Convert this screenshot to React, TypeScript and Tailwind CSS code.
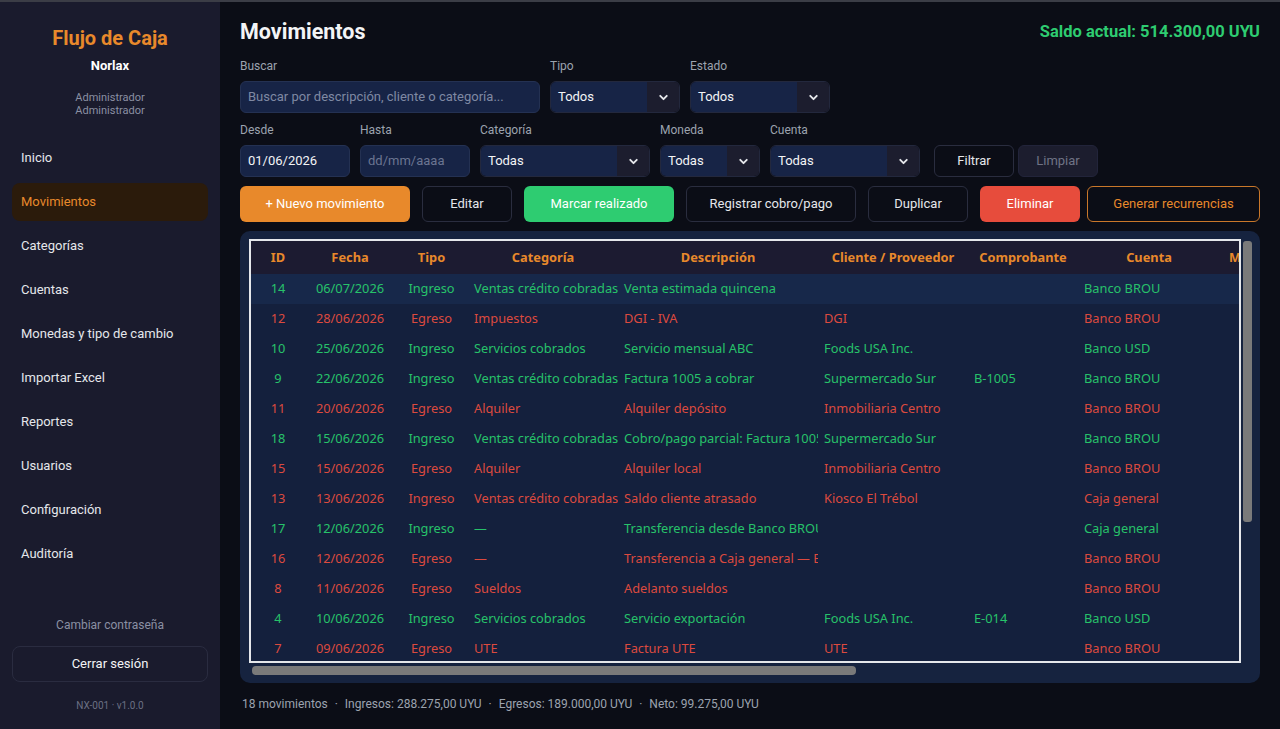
import { ChevronDown } from "lucide-react";

const nav = [
  "Inicio",
  "Movimientos",
  "Categorías",
  "Cuentas",
  "Monedas y tipo de cambio",
  "Importar Excel",
  "Reportes",
  "Usuarios",
  "Configuración",
  "Auditoría",
];

type Row = {
  id: number;
  fecha: string;
  tipo: string;
  cat: string;
  desc: string;
  cli: string;
  comp: string;
  cuenta: string;
  ok: boolean;
};

const rows: Row[] = [
  { id: 14, fecha: "06/07/2026", tipo: "Ingreso", cat: "Ventas crédito cobradas", desc: "Venta estimada quincena", cli: "", comp: "", cuenta: "Banco BROU", ok: true },
  { id: 12, fecha: "28/06/2026", tipo: "Egreso", cat: "Impuestos", desc: "DGI - IVA", cli: "DGI", comp: "", cuenta: "Banco BROU", ok: false },
  { id: 10, fecha: "25/06/2026", tipo: "Ingreso", cat: "Servicios cobrados", desc: "Servicio mensual ABC", cli: "Foods USA Inc.", comp: "", cuenta: "Banco USD", ok: true },
  { id: 9, fecha: "22/06/2026", tipo: "Ingreso", cat: "Ventas crédito cobradas", desc: "Factura 1005 a cobrar", cli: "Supermercado Sur", comp: "B-1005", cuenta: "Banco BROU", ok: true },
  { id: 11, fecha: "20/06/2026", tipo: "Egreso", cat: "Alquiler", desc: "Alquiler depósito", cli: "Inmobiliaria Centro", comp: "", cuenta: "Banco BROU", ok: false },
  { id: 18, fecha: "15/06/2026", tipo: "Ingreso", cat: "Ventas crédito cobradas", desc: "Cobro/pago parcial: Factura 1005 a cobrar", cli: "Supermercado Sur", comp: "", cuenta: "Banco BROU", ok: true },
  { id: 15, fecha: "15/06/2026", tipo: "Egreso", cat: "Alquiler", desc: "Alquiler local", cli: "Inmobiliaria Centro", comp: "", cuenta: "Banco BROU", ok: false },
  { id: 13, fecha: "13/06/2026", tipo: "Ingreso", cat: "Ventas crédito cobradas", desc: "Saldo cliente atrasado", cli: "Kiosco El Trébol", comp: "", cuenta: "Caja general", ok: false },
  { id: 17, fecha: "12/06/2026", tipo: "Ingreso", cat: "—", desc: "Transferencia desde Banco BROU", cli: "", comp: "", cuenta: "Caja general", ok: true },
  { id: 16, fecha: "12/06/2026", tipo: "Egreso", cat: "—", desc: "Transferencia a Caja general — Banco BROU", cli: "", comp: "", cuenta: "Banco BROU", ok: false },
  { id: 8, fecha: "11/06/2026", tipo: "Egreso", cat: "Sueldos", desc: "Adelanto sueldos", cli: "", comp: "", cuenta: "Banco BROU", ok: false },
  { id: 4, fecha: "10/06/2026", tipo: "Ingreso", cat: "Servicios cobrados", desc: "Servicio exportación", cli: "Foods USA Inc.", comp: "E-014", cuenta: "Banco USD", ok: true },
  { id: 7, fecha: "09/06/2026", tipo: "Egreso", cat: "UTE", desc: "Factura UTE", cli: "UTE", comp: "", cuenta: "Banco BROU", ok: false },
];

function Label({ children }: { children: string }) {
  return <p className="mb-[7px] h-4 text-[12px] leading-4 text-[#9ca3af]">{children}</p>;
}

function Select({ value, w }: { value: string; w: string }) {
  return (
    <div className={`flex h-8 overflow-hidden rounded-md border border-[#23283d] ${w}`}>
      <div className="flex flex-1 items-center bg-[#172446] px-[7px] text-[13px] text-[#f3f4f6]">{value}</div>
      <div className="flex w-[32px] items-center justify-center bg-[#1c1d2e]">
        <ChevronDown size={13} strokeWidth={3.5} className="text-[#e5e7eb]" />
      </div>
    </div>
  );
}

export default function App() {
  const cell = "overflow-hidden whitespace-nowrap pl-[6px] pr-0";
  const center = "overflow-hidden whitespace-nowrap px-[3px] text-center";
  return (
    <div className="flex h-[729px] w-[1280px] overflow-hidden border-t-2 border-[#3b3d46] bg-[#0b0d16] font-['Roboto',sans-serif]">
      {/* Sidebar */}
      <aside className="flex w-[220px] shrink-0 flex-col bg-[#1a1b2d] px-3">
        <h1 className="mt-[22px] text-center text-[20px] font-bold leading-7 text-[#e8892b]">Flujo de Caja</h1>
        <p className="mt-[6px] text-center text-[13px] font-bold leading-4 text-white">Norlax</p>
        <div className="mt-[17px] text-center text-[11px] leading-[13px] text-[#8b90a3]">
          <p>Administrador</p>
          <p>Administrador</p>
        </div>
        <nav className="mt-[22px] flex flex-col gap-[6px]">
          {nav.map((n) => (
            <div
              key={n}
              className={`flex h-[38px] items-center rounded-lg px-[9px] text-[13px] ${
                n === "Movimientos" ? "bg-[#2b1b0b] text-[#e8892b]" : "text-[#e5e7eb]"
              }`}
            >
              {n}
            </div>
          ))}
        </nav>
        <div className="mt-auto pb-[17px]">
          <p className="text-center text-[12px] leading-4 text-[#8b90a3]">Cambiar contraseña</p>
          <div className="mt-[13px] flex h-9 items-center justify-center rounded-lg border border-[#2a2c40] text-[13px] text-[#f3f4f6]">
            Cerrar sesión
          </div>
          <p className="mt-[18px] text-center text-[10px] leading-3 text-[#6b7083]">NX-001 · v1.0.0</p>
        </div>
      </aside>

      {/* Main */}
      <main className="flex min-w-0 flex-1 flex-col px-5">
        <div className="mt-[16px] flex items-center justify-between">
          <h2 className="text-[21.5px] font-bold leading-7 text-[#f3f4f6]">Movimientos</h2>
          <p className="text-[16.5px] font-bold text-[#2ecc71]">Saldo actual: 514.300,00 UYU</p>
        </div>

        {/* Filters row 1 */}
        <div className="mt-[12px] flex gap-[10px]">
          <div>
            <Label>Buscar</Label>
            <div className="flex h-8 w-[300px] items-center rounded-md border border-[#243152] bg-[#172446] px-[7px] text-[13px] text-[#7f89a3]">
              Buscar por descripción, cliente o categoría...
            </div>
          </div>
          <div>
            <Label>Tipo</Label>
            <Select value="Todos" w="w-[130px]" />
          </div>
          <div>
            <Label>Estado</Label>
            <Select value="Todos" w="w-[140px]" />
          </div>
        </div>

        {/* Filters row 2 */}
        <div className="mt-[9px] flex items-end gap-[10px]">
          <div>
            <Label>Desde</Label>
            <div className="flex h-8 w-[110px] items-center rounded-md border border-[#243152] bg-[#172446] px-[7px] text-[13px] text-[#f3f4f6]">
              01/06/2026
            </div>
          </div>
          <div>
            <Label>Hasta</Label>
            <div className="flex h-8 w-[110px] items-center rounded-md border border-[#243152] bg-[#172446] px-[7px] text-[13px] text-[#6b7591]">
              dd/mm/aaaa
            </div>
          </div>
          <div>
            <Label>Categoría</Label>
            <Select value="Todas" w="w-[170px]" />
          </div>
          <div>
            <Label>Moneda</Label>
            <Select value="Todas" w="w-[100px]" />
          </div>
          <div>
            <Label>Cuenta</Label>
            <Select value="Todas" w="w-[150px]" />
          </div>
          <div className="ml-[4px] flex gap-1">
            <div className="flex h-8 w-[80px] items-center justify-center rounded-md border border-[#2a2d3f] bg-[#0b0d16] text-[13px] text-[#e5e7eb]">
              Filtrar
            </div>
            <div className="flex h-8 w-[80px] items-center justify-center rounded-md border border-[#22243a] bg-[#1c1d2e] text-[13px] text-[#6f7385]">
              Limpiar
            </div>
          </div>
        </div>

        {/* Actions */}
        <div className="mt-[9px] flex h-9 gap-3 text-[13px]">
          <div className="flex w-[170px] items-center justify-center rounded-md bg-[#e8892b] text-white">+ Nuevo movimiento</div>
          <div className="flex w-[90px] items-center justify-center rounded-md border border-[#2a2d3f] text-[#e5e7eb]">Editar</div>
          <div className="flex w-[150px] items-center justify-center rounded-md bg-[#2ecc71] text-white">Marcar realizado</div>
          <div className="flex w-[170px] items-center justify-center rounded-md border border-[#2a2d3f] text-[#e5e7eb]">Registrar cobro/pago</div>
          <div className="flex w-[100px] items-center justify-center rounded-md border border-[#2a2d3f] text-[#e5e7eb]">Duplicar</div>
          <div className="flex w-[100px] items-center justify-center rounded-md bg-[#e74c3c] text-white">Eliminar</div>
          <div className="ml-[-5px] flex w-[173px] items-center justify-center rounded-md border border-[#c9772a] text-[#e8892b]">Generar recurrencias</div>
        </div>

        {/* Table panel */}
        <div className="mt-[9px] flex h-[452px] flex-col rounded-[10px] bg-[#16233f] py-2 pl-[9px] pr-2">
          <div className="flex h-[424px] gap-[2px]">
            <div className="min-w-0 flex-1 overflow-hidden border-2 border-[#e5e7eb] bg-[#14203d] font-['Noto_Sans',sans-serif] text-[12.8px]">
              <table className="w-[1149px] table-fixed border-collapse">
                <colgroup>
                  <col className="w-[54px]" />
                  <col className="w-[90px]" />
                  <col className="w-[73px]" />
                  <col className="w-[150px]" />
                  <col className="w-[200px]" />
                  <col className="w-[150px]" />
                  <col className="w-[110px]" />
                  <col className="w-[142px]" />
                  <col className="w-[70px]" />
                  <col className="w-[110px]" />
                </colgroup>
                <thead>
                  <tr className="h-[33px] bg-[#1c1b31] font-bold text-[#e8892b]">
                    {["ID", "Fecha", "Tipo", "Categoría", "Descripción", "Cliente / Proveedor", "Comprobante", "Cuenta", "Moneda", "Monto"].map((h) => (
                      <th key={h} className={center}>
                        {h}
                      </th>
                    ))}
                  </tr>
                </thead>
                <tbody>
                  {rows.map((r, i) => (
                    <tr
                      key={r.id}
                      className={`h-[30px] ${i === 0 ? "bg-[#17284a]" : ""} ${r.ok ? "text-[#27c26a]" : "text-[#dc4a3f]"}`}
                    >
                      <td className={center}>{r.id}</td>
                      <td className={center}>{r.fecha}</td>
                      <td className={center}>{r.tipo}</td>
                      <td className={cell}>{r.cat}</td>
                      <td className={cell}>{r.desc}</td>
                      <td className={cell}>{r.cli}</td>
                      <td className={cell}>{r.comp}</td>
                      <td className={cell}>{r.cuenta}</td>
                      <td className={center}>{r.cuenta === "Banco USD" ? "USD" : "UYU"}</td>
                      <td className={cell}></td>
                    </tr>
                  ))}
                </tbody>
              </table>
            </div>
            {/* vertical scrollbar */}
            <div className="w-[9px] pt-[2px]">
              <div className="h-[281px] rounded-[3px] bg-[#7a7a7a]" />
            </div>
          </div>
          {/* horizontal scrollbar */}
          <div className="mt-[3px] h-[9px] pl-[3px]">
            <div className="h-full w-[604px] rounded-[4px] bg-[#7a7a7a]" />
          </div>
        </div>

        <p className="mt-[13px] pl-[2px] text-[12px] leading-4 text-[#9ca3af]">
          18 movimientos <span className="px-[4px]">·</span> Ingresos: 288.275,00 UYU <span className="px-[4px]">·</span> Egresos: 189.000,00 UYU{" "}
          <span className="px-[4px]">·</span> Neto: 99.275,00 UYU
        </p>
      </main>
    </div>
  );
}
